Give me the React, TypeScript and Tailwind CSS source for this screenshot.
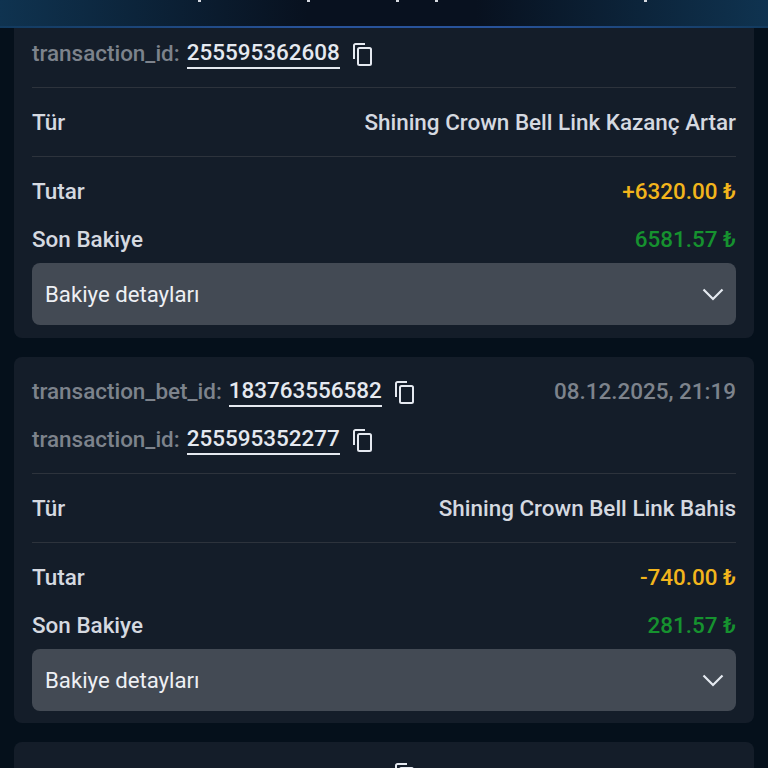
import React from "react";

function CopyIcon() {
  return (
    <svg width="22" height="24" viewBox="0 0 22 24" fill="none" stroke="#e5e9f0" strokeWidth="2" className="shrink-0">
      <path d="M2 17V3.5C2 2.7 2.7 2 3.5 2H13" />
      <rect x="6" y="6" width="13" height="17" rx="1.5" />
    </svg>
  );
}

function Chevron() {
  return (
    <svg width="22" height="13" viewBox="0 0 22 13" fill="none" stroke="#e5e9f0" strokeWidth="2.2">
      <path d="M1.5 1.5L11 11L20.5 1.5" />
    </svg>
  );
}

function IdRow({ label, value }: { label: string; value: string }) {
  return (
    <div className="flex items-center">
      <span className="mb-[2px] text-[#7d838c]">{label}:</span>
      <span className="ml-[7px] h-[30px] border-b-2 border-[#e5e9f0] text-[#e5e9f0] leading-[26px]">{value}</span>
      <span className="ml-[12px] flex"><CopyIcon /></span>
    </div>
  );
}

function Rest({ type, amount, balance }: { type: string; amount: string; balance: string }) {
  return (
    <>
      <div className="mt-[18px] border-t border-[#2d333c] h-[69px] pb-[1px] flex items-center justify-between text-[#d5d9e0]">
        <span>Tür</span>
        <span>{type}</span>
      </div>
      <div className="border-t border-[#2d333c] pt-[17px] pb-[1px] flex items-center justify-between h-[53px] text-[#d5d9e0]">
        <span>Tutar</span>
        <span className="text-[#f2b51c]">{amount} ₺</span>
      </div>
      <div className="mt-[14px] pb-[2px] flex items-center justify-between h-[34px] text-[#d5d9e0]">
        <span>Son Bakiye</span>
        <span className="text-[#16922f]">{balance} ₺</span>
      </div>
      <div className="mt-[6px] h-[62px] rounded-[8px] bg-[#434a54] flex items-center justify-between pl-[13px] pr-[12px]">
        <span className="font-normal text-[22.2px] text-[#eef0f4]">Bakiye detayları</span>
        <Chevron />
      </div>
    </>
  );
}

const marks = ["left-[198px]", "left-[307px]", "left-[396px]", "left-[435px]", "left-[644px]"];

export default function App() {
  return (
    <div className="h-[768px] w-[768px] overflow-hidden bg-[#05101b] font-['Roboto',sans-serif] font-medium text-[22.45px] leading-[28px]">
      <div className="relative flex h-[28px] flex-col justify-end bg-[linear-gradient(90deg,#0f3350_0%,#08111f_40%,#08111f_62%,#0f3350_100%)]">
        {marks.map((m) => (
          <span key={m} className={`absolute top-0 h-[2px] w-[3px] bg-[#d5d9e0] ${m}`} />
        ))}
        <div className="h-[2px] bg-[linear-gradient(90deg,#123a5e_0%,#28539a_40%,#28539a_65%,#123a5e_100%)]" />
      </div>
      <div className="px-[14px]">
        <div className="bg-[#141d29] rounded-b-[8px] px-[18px] pt-[11px] pb-[13px]">
          <IdRow label="transaction_id" value="255595362608" />
          <Rest type="Shining Crown Bell Link Kazanç Artar" amount="+6320.00" balance="6581.57" />
        </div>
        <div className="mt-[19px] bg-[#141d29] rounded-[8px] px-[18px] pt-[20px] pb-[12px]">
          <div className="flex items-center justify-between">
            <IdRow label="transaction_bet_id" value="183763556582" />
            <span className="mb-[2px] text-[#7d838c]">08.12.2025, 21:19</span>
          </div>
          <div className="mt-[18px]">
            <IdRow label="transaction_id" value="255595352277" />
          </div>
          <Rest type="Shining Crown Bell Link Bahis" amount="-740.00" balance="281.57" />
        </div>
        <div className="mt-[19px] h-[60px] bg-[#141d29] rounded-[8px] px-[18px] pt-[20px]">
          <div className="ml-[362px]"><CopyIcon /></div>
        </div>
      </div>
    </div>
  );
}
